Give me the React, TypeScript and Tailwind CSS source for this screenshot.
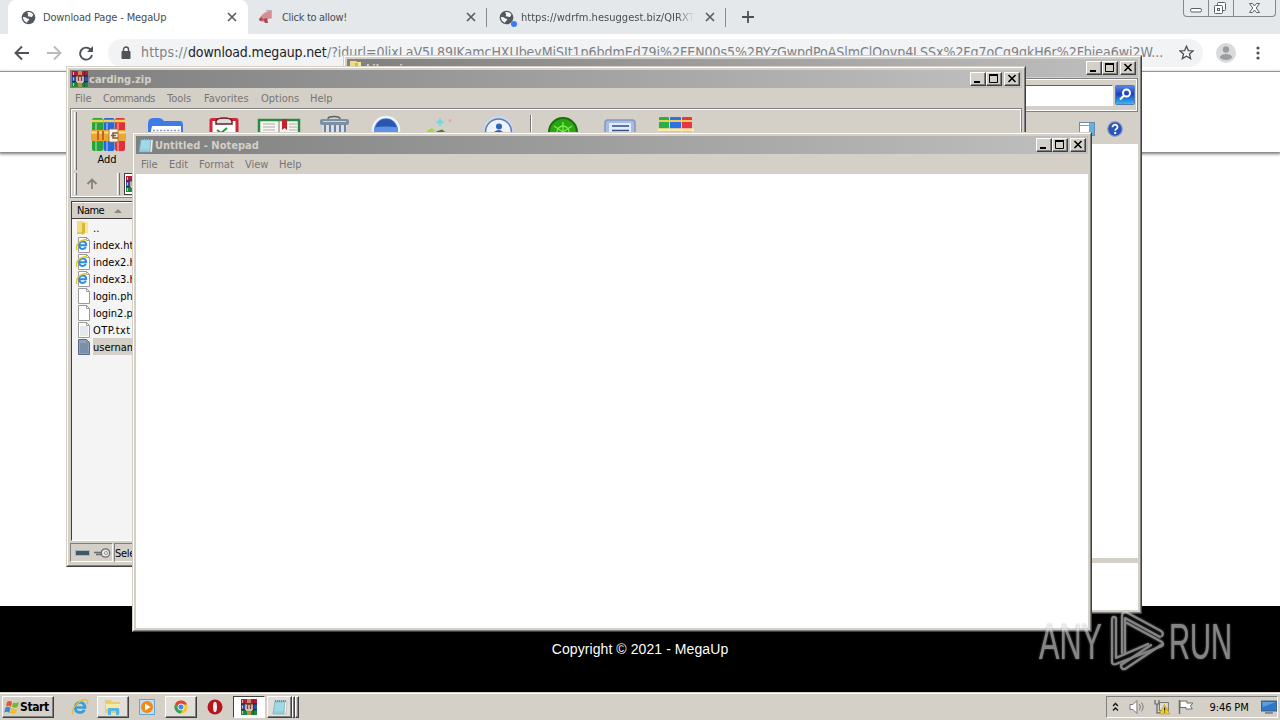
import type { ReactNode } from "react";
import clsx from "clsx";

const raised =
  "border border-t-white border-l-white border-r-[#404040] border-b-[#404040] bg-[#d4d0c8]";

function WindowFrame({ className, children }: { className: string; children: ReactNode }) {
  return (
    <div
      className={clsx(
        "absolute flex flex-col overflow-hidden border border-t-[#d4d0c8] border-l-[#d4d0c8] border-r-[#404040] border-b-[#404040] bg-[#d4d0c8]",
        className
      )}>
      <div className="flex min-h-0 flex-1 flex-col border border-t-white border-l-white border-r-[#808080] border-b-[#808080] p-[2px]">
        {children}
      </div>
    </div>
  );
}

function CaptionButton({ children }: { children: ReactNode }) {
  return (
    <span className={clsx("flex h-[14px] w-4", raised)}>
      <svg viewBox="0 0 14 12" className="h-3 w-[14px] shadow-[inset_-1px_-1px_0_#808080]">
        {children}
      </svg>
    </span>
  );
}

function TitleBar({ icon, title }: { icon: ReactNode; title: string }) {
  return (
    <div className="flex h-[18px] shrink-0 items-center bg-linear-to-r from-[#808080] to-[#c0c0c0] pr-[2px] pl-[2px]">
      {icon}
      <span className="ml-px h-[18px] text-[11px] leading-[20px] font-bold tracking-[0.02px] whitespace-nowrap text-[#d4d0c8]">
        {title}
      </span>
      <div className="ml-auto flex">
        <CaptionButton>
          <rect x="3" y="8" width="6" height="2" fill="#000" />
        </CaptionButton>
        <CaptionButton>
          <path d="M2.500 1v8.500h8V1" fill="none" stroke="#000" />
          <rect x="2" y="1" width="9" height="2" fill="#000" />
        </CaptionButton>
        <span className="w-[2px]" />
        <CaptionButton>
          <path d="M3.500 2l7 7M10.500 2l-7 7" stroke="#000" strokeWidth="1.600" />
        </CaptionButton>
      </div>
    </div>
  );
}

function RarIcon({ className }: { className: string }) {
  return (
    <svg viewBox="0 0 16 16" className={clsx("shrink-0", className)}>
      <rect width="16" height="5" fill="#b01c40" />
      <rect y="5" width="16" height="6" fill="#2c50b8" />
      <rect y="11" width="16" height="5" fill="#1a8a3e" />
      <path d="M0 5h16M0 10.800h16" stroke="#1a1a2a" strokeWidth=".9" />
      <path d="M1.500 1v3M1.500 6.500v3M1.500 12v3" stroke="#e0b8a0" />
      <path d="M12.500 0v16" stroke="#1a1a2a" strokeOpacity=".5" strokeWidth=".8" />
      <rect x="6" width="4" height="4" fill="#c98a5a" />
      <rect x="6" y="12" width="4" height="4" fill="#b8864e" />
      <rect x="4" y="4.500" width="8" height="7" fill="#7c4634" />
      <path d="M5 11V5.500M8 10V6M11 11V5.500M5 11h6" stroke="#f2e6d8" strokeWidth="1.300" fill="none" />
    </svg>
  );
}

function NotepadIcon({ className }: { className: string }) {
  return (
    <svg viewBox="0 0 16 16" className={clsx("shrink-0", className)}>
      <path d="M3 2h10l-1 13H1z" fill="#8fd0e2" stroke="#6fa5b8" strokeWidth=".6" />
      <path d="M13 2l2 1-1 12h-2z" fill="#edf4f2" stroke="#8f9a9a" strokeWidth=".4" />
      <path d="M3 5h9M3 7h9M2.500 9h9M2.500 11h9" stroke="#b9e4ee" strokeWidth=".8" />
      <path d="M3 2h11" stroke="#5f7a84" strokeWidth="1.600" strokeDasharray="1 1" />
    </svg>
  );
}

function FolderIcon({ className }: { className: string }) {
  return (
    <svg viewBox="0 0 16 16" className={clsx("shrink-0", className)}>
      <path d="M1 1h6l1 1h4v11H1z" fill="#f2dc7c" />
      <path d="M6 3h3v10l-3 2z" fill="#d9b63e" />
      <path d="M9 2h3v11H9z" fill="#f8e690" />
      <path d="M1 12h5v2H1z" fill="#e6c653" />
    </svg>
  );
}

function PageIcon({ kind }: { kind: string }) {
  if (kind === "folder") return <FolderIcon className="h-4 w-4" />;
  return (
    <svg viewBox="0 0 16 16" className="h-4 w-4 shrink-0">
      <path
        d="M2.500.5h8l3 3v12h-11z"
        fill={kind === "selected" ? "#8fa3bb" : "#fff"}
        stroke={kind === "selected" ? "#596c86" : "#9a9a9a"}
      />
      <path d="M10.500.5v3h3" fill="none" stroke="#8a8a8a" strokeWidth=".8" />
      {(kind === "text" || kind === "selected") && (
        <path
          d="M4 5h8M4 7h8M4 9h8M4 11h8M4 13h8"
          stroke={kind === "selected" ? "#5c728f" : "#b9c7ce"}
          strokeWidth=".8"
        />
      )}
      {kind === "html" && (
        <>
          <path
            d="M3.300 8.300h6.900c0-5-6.900-5-6.900 0s5.500 4 6.600 1.700"
            fill="none"
            stroke="#2f8be0"
            strokeWidth="2"
          />
          <path d="M1 13C-1.500 8 5 1.500 11 3" fill="none" stroke="#e5c22e" strokeWidth="1.300" />
        </>
      )}
    </svg>
  );
}

function GlobeIcon() {
  return (
    <svg viewBox="0 0 16 16" className="h-[15px] w-[15px] shrink-0">
      <circle cx="8" cy="8" r="7.300" fill="#54585d" />
      <path
        d="M2 7.500c2 0 3.500.3 4.500 1.400s2 .2 2.300 1.300c.2 1-1.500 1-1.700 2.100-.1.900-.8 1.300-1.500 1C3.500 12.300 2 10 2 7.500zM7 2.200c2.600-.6 5 .7 6.200 2.800l-1.500 2.400c-1.200.7-2-.7-3.100-.4-1.300.2-1.600-.7-1.100-1.700.5-.9-.9-1.600-.5-3.100z"
        fill="#f4f6f7"
      />
    </svg>
  );
}

function TabClose({ className }: { className: string }) {
  return (
    <svg viewBox="0 0 10 10" className={clsx("h-[10px] w-[10px] shrink-0", className)}>
      <path d="M1 1l8 8M9 1L1 9" stroke="#5a5e63" strokeWidth="1.700" />
    </svg>
  );
}

function TabStrip() {
  return (
    <div className="flex h-[34px] items-start bg-[#e4e8eb] pl-2 text-[11px] text-[#4a4d51]">
      <div className="flex h-[34px] w-60 items-center rounded-t-lg bg-white pl-[13px]">
        <GlobeIcon />
        <span className="ml-[7px] w-[124px] pt-[2px] tracking-[-0.15px] whitespace-nowrap">
          Download Page - MegaUp
        </span>
        <TabClose className="ml-[60px]" />
      </div>
      <div className="flex h-[34px] w-[239px] items-center pl-[10px]">
        <svg viewBox="0 0 16 16" className="h-4 w-4 shrink-0">
          <path d="M5 5l3-2 5-2 1 8-4 1-2 2-4 1-3-2 1-3z" fill="#d98d92" />
          <path d="M1 10l3-2 1 3-3 1zM5 10l4-1 1 5H7z" fill="#a94850" />
          <path d="M8 1.500h5.500v8" fill="none" stroke="#b3b0b4" />
        </svg>
        <span className="ml-2 w-[66px] pt-[2px] tracking-[-0.3px] whitespace-nowrap">
          Click to allow!
        </span>
        <TabClose className="ml-[118px]" />
        <span className="ml-[10px] h-[19px] w-px shrink-0 bg-[#888c90]" />
      </div>
      <div className="flex h-[34px] w-[239px] items-center pl-3">
        <span className="relative">
          <GlobeIcon />
          <span className="absolute top-[11px] left-[12px] h-[6px] w-[6px] rounded-full bg-[#3b7df0]" />
        </span>
        <span className="ml-[7px] w-[173px] overflow-hidden mask-r-from-90% pt-[2px] tracking-[0.03px] whitespace-nowrap">
          https://wdrfm.hesuggest.biz/QIRXT
        </span>
        <TabClose className="ml-[11px]" />
        <span className="ml-[10px] h-[19px] w-px shrink-0 bg-[#888c90]" />
      </div>
      <svg viewBox="0 0 12 12" className="mt-[11px] ml-4 h-3 w-3">
        <path d="M6 0v12M0 6h12" stroke="#4d5156" strokeWidth="1.800" />
      </svg>
      <div className="mr-1 ml-auto flex h-[17px] w-[93px] rounded-b border border-t-0 border-[#85898d] bg-[#e8ebed]">
        <svg viewBox="0 0 91 16" className="h-4 w-[91px]" fill="none" stroke="#5b5f63">
          <path d="M24.500 0v16M49.500 0v16" stroke="#85898d" />
          <rect x="6.500" y="8.500" width="11" height="3.500" rx="1.500" fill="#fff" />
          <rect x="33.500" y="2.500" width="8" height="8" rx="1" fill="#fff" />
          <rect x="30.500" y="5.500" width="8" height="8" rx="1" fill="#fff" />
          <rect x="33.500" y="8.500" width="2" height="2" />
          <path
            d="M65.500 3.500h3l2 2.500 2-2.500h3l-3.300 4.500 3.300 4.500h-3l-2-2.500-2 2.500h-3l3.300-4.500z"
            fill="#fff"
          />
        </svg>
      </div>
    </div>
  );
}

function AddressBar() {
  return (
    <div className="flex h-[38px] items-center border-b border-[#a8a8a8] bg-white pl-[14px]">
      <svg viewBox="0 0 80 16" className="h-4 w-20 shrink-0" fill="none" strokeWidth="1.900">
        <path d="M15 8H2M8 1.500L1.500 8 8 14.500" stroke="#4f5256" />
        <path d="M33 8h13M40 1.500L46.500 8 40 14.500" stroke="#b8babc" />
        <path d="M76.500 4.500A6 6 0 1 0 78 10" stroke="#4f5256" />
        <path d="M79 1v6h-6z" fill="#4f5256" stroke="none" />
      </svg>
      <div className="ml-[14px] flex h-7 w-[1095px] items-center rounded-full bg-[#f1f3f4] pl-3">
        <svg viewBox="0 0 12 14" className="h-[14px] w-3 shrink-0">
          <rect x="1.500" y="5" width="9" height="8" rx="1" fill="#4f5256" />
          <path d="M3.500 6V3.500a2.500 2.500 0 0 1 5 0V6" fill="none" stroke="#4f5256" strokeWidth="1.400" />
        </svg>
        <div className="ml-[9px] flex w-[1022px] shrink-0 text-[14px] whitespace-nowrap text-[#7d8186]">
          <span className="w-[47px] shrink-0 tracking-[0.15px]">https://</span>
          <span className="w-[139px] shrink-0 tracking-[-0.15px] text-[#1f2226]">
            download.megaup.net
          </span>
          <span className="tracking-[-0.03px]">
            /?idurl=0lixLaV5L89JKamcHXUbeyMjSIt1p6bdmEd79i%2FEN00s5%2BYzGwpdPoASlmClQovp4LSSx%2Fq7oCq9gkH6r%2Fbjea6wj2W...
          </span>
        </div>
        <svg viewBox="0 0 16 16" className="ml-4 h-[15px] w-[15px] shrink-0">
          <path
            d="M8 1.300l2 4.600 5 .4-3.800 3.300 1.200 4.900L8 11.900l-4.400 2.600 1.200-4.900L1 6.300l5-.4z"
            fill="none"
            stroke="#4f5256"
            strokeWidth="1.400"
          />
        </svg>
      </div>
      <svg viewBox="0 0 20 20" className="ml-[13px] h-5 w-5">
        <circle cx="10" cy="10" r="10" fill="#d9dadb" />
        <circle cx="10" cy="6.500" r="3.200" fill="#9b9da0" />
        <ellipse cx="10" cy="14" rx="6" ry="3" fill="#9b9da0" />
      </svg>
      <svg viewBox="0 0 4 14" className="ml-[20px] h-[14px] w-1" fill="#4f5256">
        <circle cx="2" cy="2" r="1.600" />
        <circle cx="2" cy="7" r="1.600" />
        <circle cx="2" cy="12" r="1.600" />
      </svg>
    </div>
  );
}

function ExplorerWindow() {
  return (
    <WindowFrame className="top-[55px] left-[343px] h-[559px] w-[799px]">
      <TitleBar icon={<FolderIcon className="h-4 w-4" />} title="Libraries" />
      <div className="mt-px flex h-[34px] shrink-0 items-center justify-end border border-[#808080] pr-[2px] shadow-[inset_1px_1px_0_#fff,inset_-1px_-1px_0_#fff]">
        <div className="h-[21px] w-[300px] border border-t-[#606060] border-l-[#606060] border-r-white border-b-white bg-white" />
        <svg viewBox="0 0 20 20" className="ml-[2px] h-5 w-5">
          <defs>
            <linearGradient id="search" x1="0" y1="0" x2="0" y2="1">
              <stop offset="0" stopColor="#5c8ae6" />
              <stop offset=".45" stopColor="#1b3fc0" />
              <stop offset="1" stopColor="#35c3f0" />
            </linearGradient>
          </defs>
          <rect x=".5" y=".5" width="19" height="19" rx="1" fill="url(#search)" stroke="#5a78b8" />
          <circle cx="11.500" cy="8" r="3.500" fill="none" stroke="#fff" strokeWidth="2" />
          <path d="M9 10.500L5 14.500" stroke="#fff" strokeWidth="2.200" />
        </svg>
      </div>
      <div className="flex h-8 shrink-0 items-center justify-end pt-[2px] pr-[15px]">
        <svg viewBox="0 0 16 14" className="h-[14px] w-4">
          <rect x=".5" y=".5" width="15" height="13" fill="#fff" stroke="#6b8cae" />
          <rect x="10" y="1" width="5" height="12" fill="#62b3dc" />
          <path d="M1 3.500h9" stroke="#7c9cc0" />
        </svg>
        <svg viewBox="0 0 16 16" className="ml-3 h-4 w-4">
          <circle cx="8" cy="8" r="7.300" fill="#2b53b8" stroke="#8a9cc8" strokeWidth="1.200" />
          <path
            d="M5.500 6.200c0-3.400 5.200-3.200 5 0-.1 1.700-2.300 1.700-2.300 3.500"
            fill="none"
            stroke="#fff"
            strokeWidth="1.800"
          />
          <rect x="7.200" y="11" width="2" height="2" fill="#fff" />
        </svg>
      </div>
      <div className="min-h-0 flex-1 bg-white" />
      <div className="h-[5px] shrink-0 bg-[#d4d0c8]" />
      <div className="h-[47px] shrink-0 bg-white" />
    </WindowFrame>
  );
}

const files = [
  { name: "..", kind: "folder" },
  { name: "index.html", kind: "html" },
  { name: "index2.html", kind: "html" },
  { name: "index3.html", kind: "html" },
  { name: "login.php", kind: "page" },
  { name: "login2.php", kind: "page" },
  { name: "OTP.txt", kind: "text" },
  { name: "username.txt", kind: "selected" },
];

function Books({ className }: { className: string }) {
  return (
    <svg viewBox="0 0 36 36" className={clsx("shrink-0", className)}>
      <rect x="1" y="1" width="11" height="33" rx="2" fill="#27a43a" />
      <rect x="12.500" y="1" width="11" height="33" rx="2" fill="#2767dc" />
      <rect x="24" y="1" width="10" height="33" rx="2" fill="#e2303b" />
      <path d="M1 4h11M12.500 4h11M24 4h10" stroke="#f2d34c" strokeWidth="2.500" />
      <path d="M5 6v28M16 6v28M27 6v28" stroke="#fff" strokeOpacity=".35" strokeWidth="2" />
      <rect y="13" width="35" height="11" rx="1" fill="#eda634" />
      <path d="M0 15.500h35" stroke="#ffe08a" strokeWidth="2" />
      <path d="M7 14v9M12 14v9" stroke="#bd661c" strokeWidth="2" />
      <rect x="18" y="12" width="9" height="13" rx="1" fill="#f6f2ec" stroke="#a06a3a" strokeWidth=".8" />
      <path d="M27 16h-5v5h5M20 18.500h5" fill="none" stroke="#8b5a35" strokeWidth="1.600" />
    </svg>
  );
}

function ToolbarIcons() {
  return (
    <svg viewBox="146 115 554 36" className="ml-[19px] h-9 w-[554px] shrink-0">
      <path d="M148 124q0-6 5-6h6q3 0 5 3h16q3 0 3 4v20h-35z" fill="#3d7ce8" />
      <path d="M151 131l1-5h29v20h-30z" fill="#fff" />
      <path d="M153 130.500h27" stroke="#7f9fd0" strokeWidth="1.500" strokeDasharray="2 1.500" />
      <rect x="211" y="119.500" width="26" height="30" rx="1" fill="#fff" stroke="#d32538" strokeWidth="3" />
      <path d="M216 124v-3q1-3 8-3t8 3v3z" fill="#ddd" stroke="#6d1e26" strokeWidth="1.500" />
      <path d="M217 130l4 3 6-5" fill="none" stroke="#289a38" strokeWidth="2" />
      <path d="M259 120h40v25h-40z" fill="#f7f7ef" stroke="#2a8a43" strokeWidth="2.500" />
      <path d="M263 124h12M263 127h12M263 130h12M289 124h8M289 127h8M289 130h8" stroke="#aaa" />
      <path d="M279 121v25" stroke="#777" />
      <path d="M282 119h5v11l-2.500-2-2.500 2z" fill="#c3212d" />
      <rect x="320" y="119" width="29" height="6" rx="2" fill="#7e8fa3" />
      <path d="M323 121.500h23" stroke="#c9d5e0" />
      <path d="M322 125h25l-3 25h-19z" fill="#d7e0e9" />
      <path d="M325 125v25M330 125v25M335 125v25M340 125v25M345 125v25" stroke="#70839b" strokeWidth="2" />
      <path d="M328 119q0-2.500 6-2.500t6 2.500" fill="none" stroke="#56636f" strokeWidth="1.500" />
      <circle cx="386" cy="130" r="13" fill="#4a80de" stroke="#eef3fc" strokeWidth="2.500" />
      <path d="M375.500 128q2-9 10.500-9t10.500 9z" fill="#2a56ae" />
      <path d="M374 127.500q12-2 24 0v5h-24z" fill="#5f93e8" />
      <path d="M440 117l1.500 3.500L445 122l-3.500 1.500L440 127l-1.500-3.500L435 122l3.500-1.500z" fill="#75d6e6" />
      <circle cx="450" cy="120.500" r="1.500" fill="#f1a5a5" />
      <path d="M427 131l5-3 3 3-3 3-5-1z" fill="#9fdc3a" />
      <path d="M436 131.500l6-2 4 3h-9z" fill="#4f7c34" />
      <circle cx="498.500" cy="131" r="13.500" fill="#eef3fb" stroke="#cad8ee" strokeWidth="3" />
      <circle cx="498.500" cy="132" r="13" fill="none" stroke="#5c7cb8" strokeWidth="1.400" />
      <circle cx="499" cy="126.500" r="3" fill="#2f62bd" />
      <path d="M494 132q5-4 9 0v6h-9z" fill="#2f62bd" />
      <path d="M530.500 114v40" stroke="#777" />
      <path d="M531.500 114v40" stroke="#fff" />
      <circle cx="563" cy="132" r="14" fill="#2aa613" stroke="#176e0c" strokeWidth="2" />
      <path d="M563 122v10M554 126l9 6 9-6" stroke="#79ee4d" strokeWidth="1.300" fill="none" />
      <circle cx="563" cy="132" r="6" fill="none" stroke="#79ee4d" strokeWidth="1.300" />
      <rect x="605" y="120" width="30" height="24" rx="3" fill="#a7bde6" stroke="#8297c1" strokeWidth="1.500" />
      <rect x="609" y="123" width="22" height="20" fill="#e3ebfa" />
      <path d="M612 126h17M612 130.500h17" stroke="#324f86" strokeWidth="1.500" />
      <rect x="659" y="117" width="10" height="20" rx="1" fill="#28b044" />
      <rect x="670" y="117" width="11" height="20" rx="1" fill="#2e72e2" />
      <rect x="682" y="117" width="10" height="20" rx="1" fill="#e63543" />
      <path d="M659 121h33" stroke="#f0cd57" strokeWidth="2" />
      <path d="M658 130h36" stroke="#ffe6a4" strokeWidth="3.500" />
    </svg>
  );
}

function Grip({ className }: { className: string }) {
  return (
    <span className={clsx("w-[3px] shrink-0 border-r border-l border-r-[#707070] border-l-white", className)} />
  );
}

function WinRarWindow() {
  return (
    <WindowFrame className="top-[66px] left-[66px] h-[501px] w-[960px]">
      <TitleBar icon={<RarIcon className="h-4 w-4" />} title="carding.zip" />
      <div className="flex h-5 shrink-0 items-center pt-[2px] pl-[5px] text-[11px] whitespace-nowrap text-[#777573]">
        <span className="w-7">File</span>
        <span className="w-16 tracking-[-0.5px]">Commands</span>
        <span className="w-[37px]">Tools</span>
        <span className="w-[57px]">Favorites</span>
        <span className="w-[49px]">Options</span>
        <span>Help</span>
      </div>
      <div className="flex h-[90px] shrink-0 flex-col border border-[#808080] shadow-[inset_1px_1px_0_#fff,inset_-1px_-1px_0_#fff]">
        <div className="flex h-[63px] shrink-0 pt-[3px] pl-[3px]">
          <Grip className="h-[58px]" />
          <div className="ml-[14px] flex w-9 flex-col items-center pt-[5px] text-[11px] leading-[14px] text-black">
            <Books className="h-9 w-9" />
            <span className="mr-[4px]">Add</span>
          </div>
          <div className="pt-[3px]">
            <ToolbarIcons />
          </div>
        </div>
        <div className="flex h-6 items-center pl-[3px]">
          <Grip className="h-[22px]" />
          <svg viewBox="0 0 12 12" className="ml-[9px] h-3 w-3">
            <path d="M6 11V1.500M1.500 6L6 1.500 10.500 6" fill="none" stroke="#85827e" strokeWidth="1.800" />
          </svg>
          <Grip className="ml-[19px] h-[22px]" />
          <div className="ml-1 flex h-[22px] w-40 items-center border border-[#404040] bg-white pl-px">
            <RarIcon className="h-4 w-4" />
          </div>
        </div>
      </div>
      <div className="mt-[3px] ml-px flex h-[340px] shrink-0 flex-col border border-t-[#404040] border-l-[#404040] border-r-white border-b-white bg-[#f4f4f4] text-[11px]">
        <div className="flex h-[17px] shrink-0 items-center border-b border-[#404040] bg-[#d4d0c8] pt-[2px] pl-[5px] text-black shadow-[inset_0_1px_0_#fff]">
          <span className="w-[27px] tracking-[-0.5px]">Name</span>
          <span className="ml-[10px] h-0 w-0 border-x-[4px] border-b-[4px] border-x-transparent border-b-[#8a8782]" />
        </div>
        {files.map((file) => (
          <div key={file.name} className="flex h-[17px] shrink-0 items-center pl-1 text-black">
            <PageIcon kind={file.kind} />
            <span
              className={clsx(
                "ml-px h-[17px] leading-[19px] whitespace-nowrap",
                file.kind === "selected" && "bg-[#d4d0c8] pr-4",
                file.kind === "text" && "tracking-[0.4px]"
              )}>
              {file.name}
            </span>
          </div>
        ))}
      </div>
      <div className="mt-[2px] flex h-[19px] shrink-0 text-[11px]">
        <div className="flex w-[43px] items-center border border-t-[#808080] border-l-[#808080] border-r-white border-b-white pl-1">
          <svg viewBox="0 0 36 12" className="h-3 w-9">
            <rect x=".5" y="3.500" width="14" height="5" fill="#3d5866" stroke="#aab5b8" />
            <path d="M19 5.500h9M21 7.500h7" stroke="#6c6c6c" strokeWidth="1.500" />
            <circle cx="30.500" cy="6" r="4.200" fill="#e8e8e8" stroke="#6c6c6c" strokeWidth="1.300" />
            <circle cx="31" cy="6" r="1.500" fill="#fff" stroke="#777" strokeWidth=".8" />
          </svg>
        </div>
        <div className="ml-px flex flex-1 items-center border border-t-[#808080] border-l-[#808080] border-r-white border-b-white pt-[3px] tracking-[-0.3px] whitespace-nowrap text-black">
          Selected 1 file
        </div>
      </div>
    </WindowFrame>
  );
}

function NotepadWindow() {
  return (
    <WindowFrame className="top-[132px] left-[132px] h-[500px] w-[960px]">
      <TitleBar icon={<NotepadIcon className="h-4 w-4" />} title="Untitled - Notepad" />
      <div className="flex h-5 shrink-0 items-center pt-[2px] pl-[5px] text-[11px] whitespace-nowrap text-[#777573]">
        <span className="w-7">File</span>
        <span className="w-[30px]">Edit</span>
        <span className="w-[46px]">Format</span>
        <span className="w-[34px]">View</span>
        <span>Help</span>
      </div>
      <div className="min-h-0 flex-1 bg-white" />
    </WindowFrame>
  );
}

function Watermark() {
  return (
    <svg
      viewBox="0 0 210 66"
      className="absolute top-[608px] left-[1035px] h-[66px] w-[210px] overflow-visible opacity-60 drop-shadow-[0_0_1px_#999]">
      <g fill="#dedede" fontFamily="Liberation Sans" fontSize="50">
        <text x="4" y="51" textLength="63" lengthAdjust="spacingAndGlyphs">
          ANY
        </text>
        <text x="134" y="51" textLength="63" lengthAdjust="spacingAndGlyphs">
          RUN
        </text>
      </g>
      <g fill="none" stroke="#dedede" strokeWidth="2.200" strokeLinecap="round" strokeLinejoin="round">
        <path d="M81 12v-2q-4-3-4 2v42q0 3 4 2l46-18q2-2 0-4L92 15" />
        <path d="M81 12v38l32-14" />
        <path d="M87 45V8q0-4 4-4l35 19q3 2 1 5" />
        <path d="M90 45V10l35 19" />
        <path d="M126 37L90 61q-4 1-4-4l30-20" />
      </g>
    </svg>
  );
}

function TaskButton({ className, children }: { className: string; children: ReactNode }) {
  return (
    <div
      className={clsx(
        "flex h-[22px] shrink-0 items-center border border-t-white border-l-white border-r-[#404040] border-b-[#404040] shadow-[inset_-1px_-1px_0_#808080]",
        className
      )}>
      {children}
    </div>
  );
}

function Taskbar() {
  return (
    <div className="flex h-7 items-center border-t border-[#d4d0c8] bg-[#d4d0c8] pt-[1px] pr-[2px] pl-[2px] text-[11px] shadow-[inset_0_1px_0_#fff]">
      <TaskButton className="w-[52px] pl-px font-bold text-black">
        <svg viewBox="0 0 16 16" className="h-4 w-4 shrink-0">
          <path d="M3 3q3-2 5 0L7 8Q5 6 2 7.500z" fill="#ea5527" />
          <path d="M9 3.500q3 1 6-.5l-1.500 5Q11 9.500 8 8z" fill="#74b735" />
          <path d="M1.500 8.500q3-1.500 5 .5l-1.300 5q-2-2-5-.5z" fill="#3688d8" />
          <path d="M7.500 9q3 2 5.500.5L12 14q-3 1.500-6 0z" fill="#f6bd20" />
        </svg>
        <span className="text-[12px] tracking-[-0.4px]">Start</span>
      </TaskButton>
      <svg viewBox="0 0 18 18" className="ml-[17px] h-[18px] w-[18px] shrink-0">
        <path
          d="M4.500 9.500h9.500c0-7-9.800-6.500-9.800 0s7.600 6 9.200 2.200"
          fill="none"
          stroke="#359edc"
          strokeWidth="2.700"
        />
        <path d="M2 16C-1 12 9 0 16 2c1.500 1 .5 3 0 4" fill="none" stroke="#dfbd3e" strokeWidth="1.300" />
      </svg>
      <TaskButton className="ml-2 w-8 justify-center bg-[#e2dfda]">
        <svg viewBox="0 0 18 18" className="h-[18px] w-[18px]">
          <path d="M1 2h6l1 2h8v11H1z" fill="#e8cc70" />
          <path d="M2 6h14v5H2z" fill="#f6e9a8" />
          <path d="M4 17v-7h11v7h-3v-4H7v4z" fill="#5cb4e3" />
        </svg>
      </TaskButton>
      <svg viewBox="0 0 16 16" className="ml-[10px] h-4 w-4 shrink-0">
        <rect x=".5" y=".5" width="15" height="15" fill="#bfdcf2" stroke="#6aa5d2" />
        <circle cx="8" cy="8" r="6" fill="#ef8a16" />
        <path d="M6 4.500v7L11.500 8z" fill="#fff" />
      </svg>
      <TaskButton className="ml-[10px] w-8 justify-center bg-[#e2dfda]">
        <svg viewBox="0 0 16 16" className="h-[14px] w-[14px]">
          <circle cx="8" cy="8" r="7.500" fill="#f5c62b" />
          <path d="M1.500 4.200A7.500 7.500 0 0 1 14.800 5H8L5 10z" fill="#df4434" />
          <path d="M1.500 4.200A7.500 7.500 0 0 0 7.500 15.500L10.500 10H5z" fill="#33a452" />
          <circle cx="8" cy="8" r="3.500" fill="#4286ef" stroke="#fff" />
        </svg>
      </TaskButton>
      <svg viewBox="0 0 16 16" className="ml-[10px] h-4 w-4 shrink-0">
        <circle cx="8" cy="8" r="7.500" fill="#b5151b" />
        <ellipse cx="8" cy="8" rx="2" ry="5.200" fill="#eee" />
      </svg>
      <div className="ml-[10px] flex h-[22px] w-8 shrink-0 items-center justify-center border border-t-[#404040] border-l-[#404040] border-r-white border-b-white bg-white">
        <RarIcon className="h-4 w-4" />
      </div>
      <TaskButton className="ml-[2px] w-[25px] justify-center bg-[#e2dfda]">
        <NotepadIcon className="h-4 w-4" />
      </TaskButton>
      <TaskButton className="w-[3px]">{null}</TaskButton>
      <TaskButton className="w-1">{null}</TaskButton>
      <div className="ml-auto flex h-[22px] w-[172px] items-center border border-t-[#808080] border-l-[#808080] border-r-white border-b-white pl-[5px] text-black">
        <svg viewBox="0 0 7 10" className="h-[10px] w-[7px]" fill="none" stroke="#111" strokeWidth="1.300">
          <path d="M1 4l2.500-2.500L6 4M1 8.500L3.500 6 6 8.500" />
        </svg>
        <svg viewBox="0 0 18 16" className="ml-[10px] h-4 w-[18px]" fill="none" stroke="#777">
          <path d="M1 5.500h3l4-4v13l-4-4H1z" fill="#fff" />
          <path d="M10.500 5q2 3 0 6M12.500 3.500q3.500 4.500 0 9" />
        </svg>
        <svg viewBox="0 0 16 16" className="ml-[7px] h-4 w-4">
          <rect x="5.500" y="3.500" width="9" height="8" fill="#ddd" stroke="#777" />
          <path d="M1 1v4h4V1M3 5v9h4" fill="none" stroke="#666" strokeWidth="1.200" />
          <path d="M10.500 5.500L16 15H5.500z" fill="#f5d021" stroke="#a98b13" strokeWidth=".6" />
          <path d="M10.700 8.500v3M10.700 12.500v1" stroke="#222" strokeWidth="1.200" />
        </svg>
        <svg viewBox="0 0 16 16" className="ml-2 h-4 w-4" stroke="#6c6c6c">
          <path d="M2 2h7v2h6l-2.500 3 2 3H8V8.500H2z" fill="#fff" />
          <path d="M1.500 1v14" strokeWidth="1.500" />
        </svg>
        <span className="ml-[16px] w-[42px] pt-[2px] tracking-[-0.1px] whitespace-nowrap">9:46 PM</span>
        <svg viewBox="0 0 16 16" className="ml-[10px] h-4 w-4">
          <rect x="0" y="2" width="16" height="10" fill="#2e78c7" stroke="#315a88" />
          <path d="M1 3h14L2 8z" fill="#5f9fd9" />
          <path d="M4 14h8" stroke="#6a7886" strokeWidth="1.500" />
        </svg>
      </div>
    </div>
  );
}

export default function App() {
  return (
    <div className="relative flex h-[720px] w-[1280px] flex-col overflow-hidden bg-white font-['DejaVu_Sans_Condensed','DejaVu_Sans',sans-serif]">
      <TabStrip />
      <AddressBar />
      <div className="h-[80px] shrink-0 bg-white shadow-[0_1px_3px_1px_#777]" />
      <div className="flex-1" />
      <div className="flex h-[86px] shrink-0 justify-center bg-black pt-[35px] font-['Liberation_Sans',sans-serif] text-[14px] leading-4 tracking-[0.08px] text-white">
        <span>Copyright © 2021 - MegaUp</span>
      </div>
      <Taskbar />

      <ExplorerWindow />
      <WinRarWindow />
      <NotepadWindow />
      <Watermark />
    </div>
  );
}
